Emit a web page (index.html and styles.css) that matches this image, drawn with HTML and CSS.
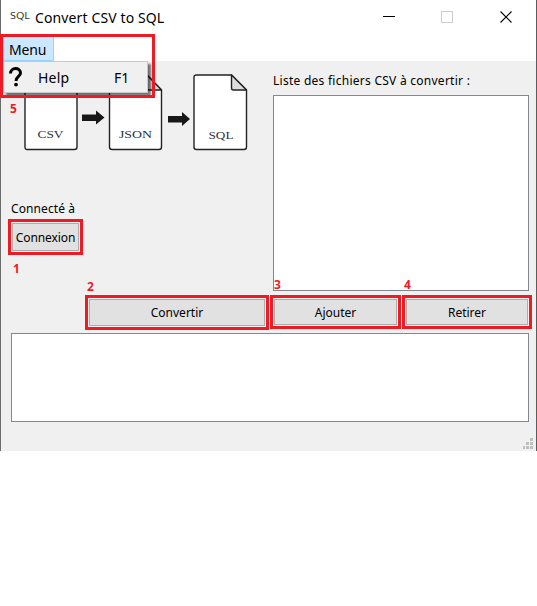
FILE: index.html
```html
<!DOCTYPE html>
<html lang="fr">
<head>
<meta charset="utf-8">
<title>Convert CSV to SQL</title>
<link rel="stylesheet" href="styles.css">
</head>
<body>
<div class="window">
  <header class="titlebar">
    <svg class="app-icon" width="25" height="35" viewBox="0 0 25 35">
      <text x="0" y="19" textLength="20" lengthAdjust="spacingAndGlyphs">SQL</text>
    </svg>
    <span class="title">Convert CSV to SQL</span>
    <svg class="controls" width="130" height="14" viewBox="0 0 130 14" fill="none">
      <path d="M0 5.500h12" stroke="#000"/>
      <rect x="58.500" y=".5" width="11" height="11" stroke="#ccc"/>
      <path d="M117.500 .5l11 11M128.500 .5l-11 11" stroke="#000" stroke-width="1.1"/>
    </svg>
  </header>
  <nav class="menubar">
    <span class="menu-item">Menu</span>
    <div class="dropdown">
      <svg class="help-icon" width="35" height="30" viewBox="0 0 35 30">
        <path d="M7.500 11.500C7.500 5 17.500 5 17.500 11C17.500 14.500 13 14.500 13 19" fill="none" stroke="#000" stroke-width="3"/>
        <circle cx="13" cy="22.600" r="1.900"/>
      </svg>
      <span class="help-label">Help</span>
      <span class="shortcut">F1</span>
    </div>
    <div class="menu-mark"></div>
    <b class="num num5">5</b>
  </nav>
  <main>
    <div class="upper">
      <section class="left">
        <svg class="diagram" width="224" height="77" viewBox="0 0 224 77">
          <g fill="#fff" stroke="#222" stroke-width="1.4" stroke-linejoin="round">
            <path d="M3 1H38L53 16V73Q53 75.500 50.500 75.500H3Q1 75.500 1 73V3Q1 1 3 1Z"/>
            <path d="M88 1H123L137.500 16V73Q137.500 75.500 135 75.500H88Q85.500 75.500 85.500 73V3Q85.500 1 88 1Z"/>
            <path d="M172.500 1H207.500L222.500 16V73Q222.500 75.500 220 75.500H172.500Q170 75.500 170 73V3Q170 1 172.500 1Z"/>
            <g fill="#ddd"><path d="M38 1V14Q38 16 40 16H53Z"/><path d="M123 1V14Q123 16 125 16H137.500Z"/><path d="M207.500 1V14Q207.500 16 209.500 16H222.500Z"/></g>
          </g>
          <g fill="#181818">
            <path d="M58 40.500H72V36.500L80.500 43.500L72 50.500V47H58Z"/>
            <path d="M144 42H158V38L166 45L158 52V48.500H144Z"/>
          </g>
          <g class="file-names" fill="#333">
            <text x="13.500" y="64" textLength="26" lengthAdjust="spacingAndGlyphs">CSV</text>
            <text x="95" y="64" textLength="33" lengthAdjust="spacingAndGlyphs">JSON</text>
            <text x="184.500" y="65" textLength="25" lengthAdjust="spacingAndGlyphs">SQL</text>
          </g>
        </svg>
        <div class="status">Connecté à</div>
        <div class="mark connect"><button>Connexion</button><b class="num num1">1</b></div>
      </section>
      <section class="right">
        <div class="list-label">Liste des fichiers CSV à convertir :</div>
        <div class="file-list"></div>
      </section>
    </div>
    <div class="actions">
      <div class="mark convert"><button>Convertir</button><b class="num num2">2</b></div>
      <div class="mark add"><button>Ajouter</button><b class="num num3">3</b></div>
      <div class="mark remove"><button>Retirer</button><b class="num num4">4</b></div>
    </div>
    <div class="log"></div>
    <svg class="grip" width="10" height="11" viewBox="0 0 10 11" fill="#bfbfbf">
      <path d="M7 0h3v3h-3zM3 4h3v3h-3zM7 4h3v3h-3zM0 8h2v3h-2zM3 8h3v3h-3zM7 8h3v3h-3z"/>
    </svg>
  </main>
</div>
</body>
</html>
```

FILE: styles.css
```css
* { box-sizing: border-box; }
body { margin: 0; background: #fff; color: #000; font: 12px/16px "Noto Sans", sans-serif; }
.window { width: 537px; height: 451px; border-left: 1px solid #6b6b6b; border-right: 1px solid #5a5c62; }
.titlebar { display: flex; height: 35px; padding: 0 23px 0 9px; }
.app-icon { font: 9.5px "Noto Sans", sans-serif; fill: #333; }
.title { padding-top: 8px; font-size: 14px; line-height: 20px; letter-spacing: .12px; white-space: nowrap; }
.controls { margin: 11px 0 0 auto; }
.menubar { position: relative; height: 26px; padding-left: 2px; }
.menu-item { display: block; width: 51px; height: 26px; padding-left: 5px; border: 1px solid #99d1ff; background: #cce8ff; font-size: 14px; line-height: 28px; letter-spacing: -.2px; }
.dropdown { position: absolute; z-index: 2; left: 2px; top: 26px; display: flex; width: 145px; height: 32px; border: 1px solid #c8c8c8; background: #f0f0f0; box-shadow: 3px 3px 2px #0008; font-size: 14px; line-height: 31px; }
.help-icon { flex: none; margin-left: -1px; }
.help-label { width: 76px; letter-spacing: .2px; }
.menu-mark { position: absolute; z-index: 3; left: -1px; top: -1px; width: 155px; height: 64px; border: 3px solid #ed1c24; }
main { height: 390px; padding-top: 12px; background: #f0f0f0; }
.upper { display: flex; height: 222px; }
.left { width: 272px; padding-top: 1px; }
.diagram { display: block; margin-left: 23px; }
.file-names { font: 11px "Liberation Serif", serif; }
.status { margin: 50px 0 2px 10px; letter-spacing: .1px; }
.mark { position: relative; border: 3px solid #ed1c24; padding: 1px; background: #f0f0f0; }
.mark button { display: block; width: 100%; height: 100%; margin: 0; padding: 1px 0 0; border: 1px solid #adadad; background: #e1e1e1; color: #000; font: inherit; white-space: nowrap; }
.connect { width: 75px; height: 36px; margin-left: 7px; }
.connect button { letter-spacing: -.1px; }
.list-label { height: 22px; letter-spacing: .26px; }
.file-list { width: 256px; height: 196px; border: 1px solid #828790; background: #fff; }
.actions { display: flex; gap: 1px; height: 38px; margin-left: 84px; }
.convert { width: 184px; height: 35px; }
.convert button { padding-top: 0; }
.add { width: 131px; height: 34px; }
.remove { width: 130px; height: 34px; }
.log { width: 518px; height: 89px; margin-left: 10px; border: 1px solid #828790; background: #fff; }
.grip { display: block; margin: 16px 0 0 522px; }
.num { position: absolute; z-index: 4; color: #ed1c24; font-size: 12px; line-height: 16px; }
.num1 { left: 2px; top: 39px; }
.num2 { left: -1px; top: -19px; }
.num3 { left: 1px; top: -21px; }
.num4 { left: -1px; top: -21px; }
.num5 { left: 9px; top: 66px; }
```
